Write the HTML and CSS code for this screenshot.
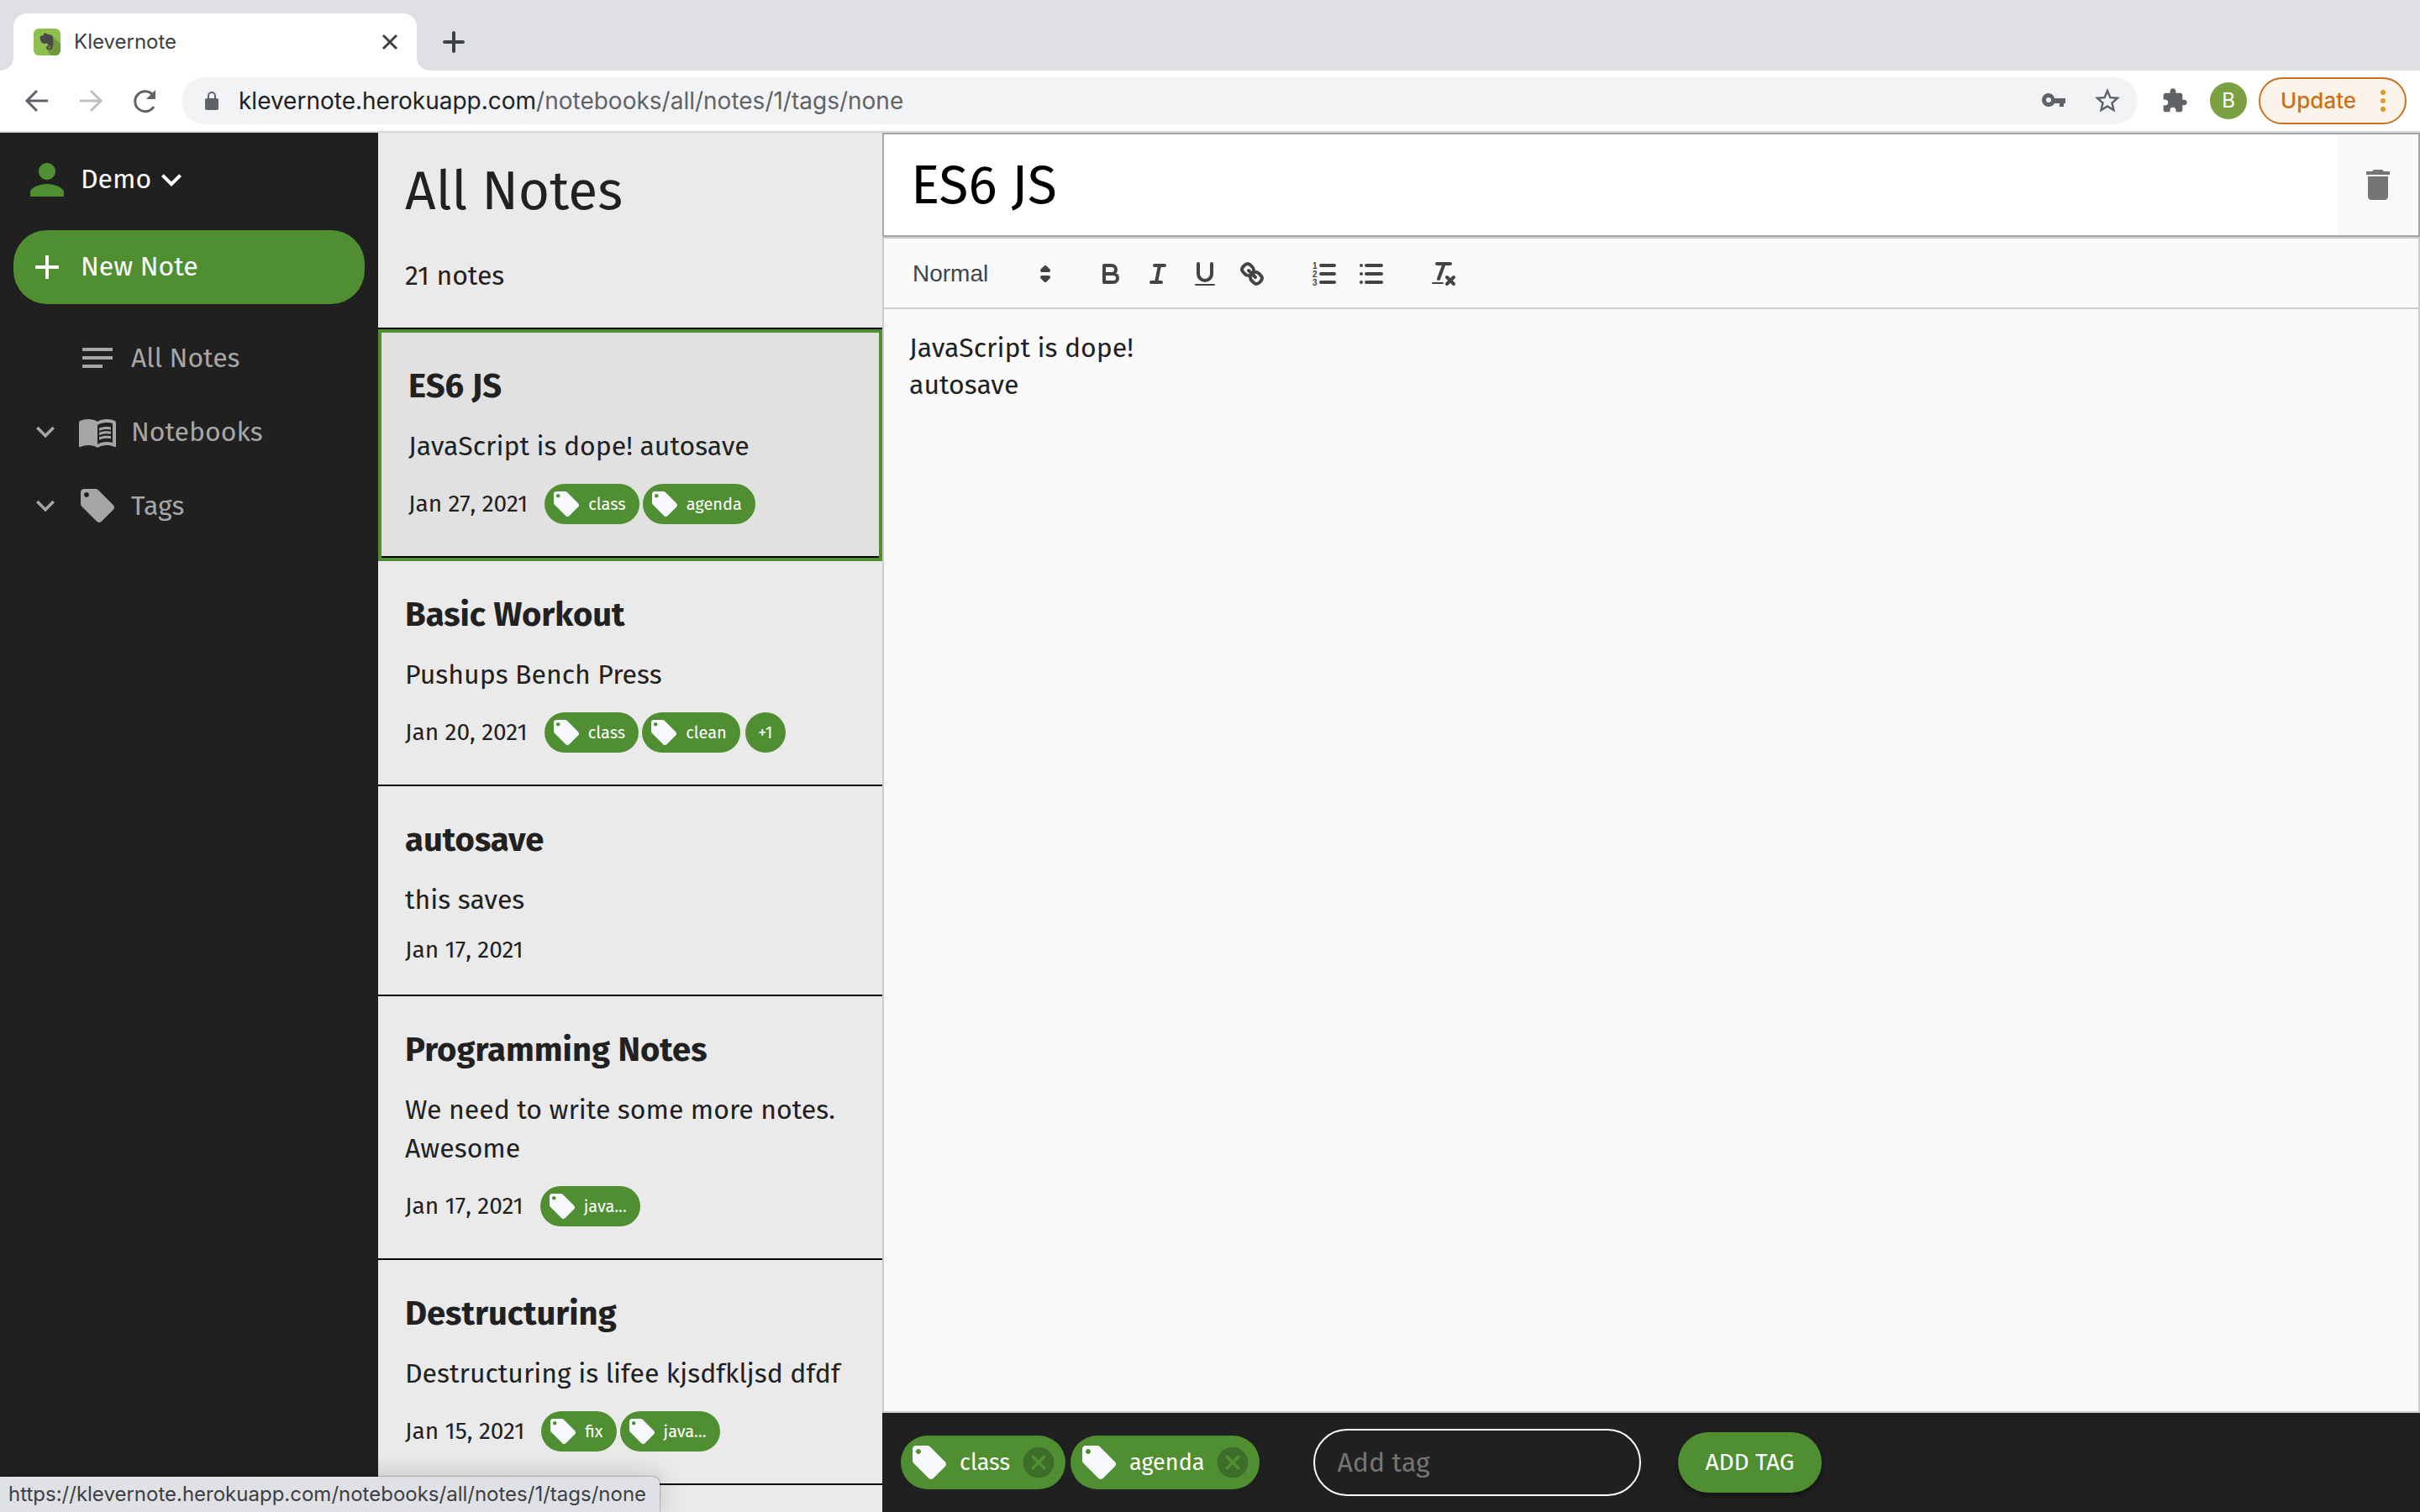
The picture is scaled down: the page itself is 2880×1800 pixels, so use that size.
FILE: index.html
```html
<!DOCTYPE html>
<html lang="en">
<head>
<meta charset="utf-8">
<title>Klevernote</title>
<link rel="stylesheet" href="styles.css">
</head>
<body>
<svg class="defs" aria-hidden="true">
  <symbol id="tag" viewBox="0 0 24 24"><path d="M21.41 11.58l-9-9C12.05 2.22 11.55 2 11 2H4c-1.1 0-2 .9-2 2v7c0 .55.22 1.05.59 1.42l9 9c.36.36.86.58 1.41.58.55 0 1.05-.22 1.41-.59l7-7c.37-.36.59-.86.59-1.41 0-.55-.23-1.06-.59-1.42zM5.5 7C4.67 7 4 6.33 4 5.5S4.67 4 5.5 4 7 4.67 7 5.5 6.33 7 5.5 7z"/></symbol>
  <symbol id="chevron" viewBox="0 0 24 24"><path d="M7.41 8.59L12 13.17l4.59-4.58L18 10l-6 6-6-6 1.41-1.41z"/></symbol>
  <symbol id="cancel" viewBox="0 0 24 24"><path d="M12 2C6.47 2 2 6.47 2 12s4.47 10 10 10 10-4.47 10-10S17.53 2 12 2zm5 13.59L15.59 17 12 13.41 8.41 17 7 15.59 10.59 12 7 8.41 8.41 7 12 10.59 15.59 7 17 8.41 13.41 12 17 15.59z"/></symbol>
</svg>

<header class="browser">
  <div class="tabstrip">
    <div class="tab">
      <svg class="favicon" viewBox="0 0 32 32"><rect width="32" height="32" rx="6" fill="#8fc04e"/><path d="M22 9l10 9v8a6 6 0 0 1-6 6h-6l-4-7z" fill="#6f9a3b"/><path d="M12 6c2-1 4 0 5 1 4 0 6 1 6 5 1 5 0 9-1 12-1 2-7 2-7-1 0-2 2-3 4-2v1c-2 0-2 2 0 2 2-1 1-4 0-4-2 0-3-1-3-3-2 2-5 1-7-1-1-3-2-5-1-7l4-1z" fill="#4a4a4a"/></svg>
      <span class="tab-title">Klevernote</span>
      <button class="bare" aria-label="Close tab"><svg width="20" height="20" viewBox="0 0 20 20" fill="none" stroke="#3c4043" stroke-width="3"><path d="M2 2l16 16M18 2L2 18"/></svg></button>
    </div>
    <button class="bare new-tab" aria-label="New tab"><svg width="26" height="26" viewBox="0 0 26 26" fill="none" stroke="#3c4043" stroke-width="4" stroke-linecap="round"><path d="M13 2v22M2 13h22"/></svg></button>
  </div>
  <div class="toolbar">
    <nav class="history">
      <button class="bare" aria-label="Back"><svg width="40" height="40" viewBox="0 0 40 40" fill="none" stroke="#5f6368" stroke-width="3"><path d="M33 20H9M20 8L8 20l12 12"/></svg></button>
      <button class="bare" aria-label="Forward"><svg width="40" height="40" viewBox="0 0 40 40" fill="none" stroke="#bdc1c6" stroke-width="3"><path d="M7 20h24M20 8l12 12-12 12"/></svg></button>
      <button class="bare" aria-label="Reload"><svg width="40" height="40" viewBox="0 0 40 40"><path d="M31 27a12 12 0 1 1-1-14" fill="none" stroke="#5f6368" stroke-width="3"/><path d="M33 7v11H22z" fill="#5f6368"/></svg></button>
    </nav>
    <div class="address">
      <svg width="18" height="24" viewBox="0 0 18 24"><rect x="1" y="9" width="16" height="14" rx="2" fill="#5f6368"/><path d="M5 10V6a4 4 0 0 1 8 0v4" fill="none" stroke="#5f6368" stroke-width="2"/></svg>
      <span class="url"><span class="host">klevernote.herokuapp.com</span>/notebooks/all/notes/1/tags/none</span>
      <button class="bare" aria-label="Saved passwords"><svg width="32" height="32" viewBox="0 0 32 32"><path fill-rule="evenodd" fill="#5f6368" d="M10 7a8 8 0 1 0 7 12h6v4h5v-4h2v-6H17a8 8 0 0 0-7-6zm0 5a3 3 0 1 1 0 6 3 3 0 0 1 0-6z"/></svg></button>
      <button class="bare" aria-label="Bookmark"><svg width="36" height="36" viewBox="0 0 24 24" fill="#5f6368"><path d="M22 9.24l-7.19-.62L12 2 9.19 8.63 2 9.24l5.46 4.73L5.82 21 12 17.27 18.18 21l-1.63-7.03L22 9.24zM12 15.4l-3.76 2.27 1-4.28-3.32-2.88 4.38-.38L12 6.1l1.71 4.04 4.38.38-3.32 2.88 1 4.28L12 15.4z"/></svg></button>
    </div>
    <button class="bare" aria-label="Extensions"><svg width="32" height="32" viewBox="0 0 24 24" fill="#5f6368"><path d="M20.5 11H19V7c0-1.100-.9-2-2-2h-4V3.500C13 2.120 11.880 1 10.500 1S8 2.120 8 3.500V5H4c-1.100 0-1.990.9-1.990 2v3.800H3.500c1.490 0 2.700 1.210 2.700 2.700s-1.210 2.700-2.700 2.700H2V20c0 1.100.9 2 2 2h3.800v-1.500c0-1.490 1.210-2.700 2.700-2.700 1.490 0 2.700 1.210 2.700 2.700V22H17c1.100 0 2-.9 2-2v-4h1.500c1.380 0 2.500-1.120 2.500-2.500S21.880 11 20.500 11z"/></svg></button>
    <button class="bare avatar">B</button>
    <button class="update">Update <svg width="8" height="28" viewBox="0 0 8 28" fill="#dd9a26"><circle cx="4" cy="4" r="3"/><circle cx="4" cy="14" r="3"/><circle cx="4" cy="24" r="3"/></svg></button>
  </div>
</header>

<main class="app">
  <aside class="sidebar">
    <button class="bare user">
      <svg width="60" height="60" viewBox="0 0 24 24" fill="#4f8f32"><path d="M12 12c2.210 0 4-1.790 4-4s-1.790-4-4-4-4 1.790-4 4 1.790 4 4 4zm0 2c-2.670 0-8 1.340-8 4v2h16v-2c0-2.660-5.330-4-8-4z"/></svg>
      <span>Demo</span>
      <svg width="48" height="48" viewBox="0 0 24 24" fill="#fff"><use href="#chevron"/></svg>
    </button>
    <button class="new-note">
      <svg width="48" height="48" viewBox="0 0 24 24" fill="#fff"><path d="M19 13h-6v6h-2v-6H5v-2h6V5h2v6h6v2z"/></svg>
      <span>New Note</span>
    </button>
    <nav class="links">
      <a href="#all"><span></span><svg width="48" height="48" viewBox="0 0 24 24"><path d="M3 18h12v-2H3v2zM3 6v2h18V6H3zm0 7h18v-2H3v2z"/></svg>All Notes</a>
      <a href="#notebooks"><svg class="twist" viewBox="0 0 24 24"><use href="#chevron"/></svg><svg width="48" height="48" viewBox="0 0 24 24"><path d="M21 5c-1.110-.35-2.330-.5-3.500-.5-1.950 0-4.050.4-5.500 1.500-1.450-1.100-3.550-1.500-5.500-1.500S2.450 4.900 1 6v14.650c0 .25.25.5.5.5.1 0 .15-.05.25-.05C3.100 20.450 5.050 20 6.500 20c1.950 0 4.050.4 5.500 1.500 1.350-.85 3.800-1.500 5.500-1.500 1.650 0 3.350.3 4.750 1.050.1.050.15.050.25.050.25 0 .5-.25.5-.5V6c-.6-.45-1.250-.75-2-1zm0 13.500c-1.100-.35-2.300-.5-3.500-.5-1.700 0-4.150.65-5.500 1.500V8c1.350-.85 3.800-1.500 5.500-1.500 1.200 0 2.400.15 3.500.5v11.500z"/><path d="M17.500 10.500c.88 0 1.730.09 2.500.26V9.240c-.79-.15-1.640-.24-2.500-.24-1.700 0-3.240.29-4.500.83v1.660c1.130-.64 2.700-.99 4.500-.99zM13 12.490v1.660c1.130-.64 2.700-.99 4.500-.99.88 0 1.730.09 2.500.26V11.900c-.79-.15-1.640-.24-2.500-.24-1.700 0-3.240.3-4.500.83zm4.500 1.840c-1.700 0-3.240.29-4.500.83v1.660c1.130-.64 2.700-.99 4.500-.99.88 0 1.730.09 2.500.26v-1.520c-.79-.16-1.640-.24-2.500-.24z"/></svg>Notebooks</a>
      <a href="#tags"><svg class="twist" viewBox="0 0 24 24"><use href="#chevron"/></svg><svg width="48" height="48"><use href="#tag"/></svg>Tags</a>
    </nav>
  </aside>

  <section class="notes">
    <header class="notes-head">
      <h1>All Notes</h1>
      <p>21 notes</p>
    </header>
    <article class="note selected">
      <h2>ES6 JS</h2>
      <p>JavaScript is dope! autosave</p>
      <div class="meta"><time>Jan 27, 2021</time><span class="chip"><svg><use href="#tag"/></svg>class</span><span class="chip"><svg><use href="#tag"/></svg>agenda</span></div>
    </article>
    <article class="note">
      <h2>Basic Workout</h2>
      <p>Pushups Bench Press</p>
      <div class="meta"><time>Jan 20, 2021</time><span class="chip"><svg><use href="#tag"/></svg>class</span><span class="chip"><svg><use href="#tag"/></svg>clean</span><span class="more">+1</span></div>
    </article>
    <article class="note">
      <h2>autosave</h2>
      <p>this saves</p>
      <div class="meta"><time>Jan 17, 2021</time></div>
    </article>
    <article class="note">
      <h2>Programming Notes</h2>
      <p>We need to write some more notes. Awesome</p>
      <div class="meta"><time>Jan 17, 2021</time><span class="chip"><svg><use href="#tag"/></svg>java...</span></div>
    </article>
    <article class="note">
      <h2>Destructuring</h2>
      <p>Destructuring is lifee kjsdfkljsd dfdf</p>
      <div class="meta"><time>Jan 15, 2021</time><span class="chip"><svg><use href="#tag"/></svg>fix</span><span class="chip"><svg><use href="#tag"/></svg>java...</span></div>
    </article>
  </section>

  <section class="editor">
    <div class="title-row">
      <input class="title" aria-label="Note title" value="ES6 JS">
      <button class="bare delete" aria-label="Delete note"><svg width="48" height="48" viewBox="0 0 24 24" fill="#757575"><path d="M6 19c0 1.100.9 2 2 2h8c1.100 0 2-.9 2-2V7H6v12zM19 4h-3.500l-1-1h-5l-1 1H5v2h14V4z"/></svg></button>
    </div>
    <div class="format">
      <div class="picker">
        <select aria-label="Text style"><option>Normal</option></select>
        <svg class="q" viewBox="0 0 18 18"><path class="solid" d="M7 11l2 2 2-2zM7 7l2-2 2 2z"/></svg>
      </div>
      <div class="group">
        <button class="bare" aria-label="Bold"><svg class="q" viewBox="0 0 18 18"><path d="M5 4h4.500a2.500 2.500 0 0 1 0 5H5zM5 9h5.500a2.500 2.500 0 0 1 0 5H5z"/></svg></button>
        <button class="bare" aria-label="Italic"><svg class="q" viewBox="0 0 18 18"><path d="M7 4h6M5 14h6M8 14l2-10"/></svg></button>
        <button class="bare" aria-label="Underline"><svg class="q" viewBox="0 0 18 18"><path d="M5 3v6a4 4 0 0 0 8 0V3"/><rect class="fill" x="3" y="15" width="12" height="1" rx=".5"/></svg></button>
        <button class="bare" aria-label="Link"><svg class="q" viewBox="0 0 18 18"><path d="M7 7l4 4M8.900 4.577a3.476 3.476 0 0 1 .36 4.679A3.476 3.476 0 0 1 4.577 8.900C3.185 7.500 2.035 6.400 4.217 4.217S7.500 3.185 8.900 4.577ZM13.423 9.100a3.476 3.476 0 0 0-4.679-.36 3.476 3.476 0 0 0 .36 4.679c1.392 1.392 2.500 2.542 4.679.36S14.815 10.500 13.423 9.100Z"/></svg></button>
      </div>
      <div class="group">
        <button class="bare" aria-label="Numbered list"><svg class="q" viewBox="0 0 18 18"><path d="M7 4h8M7 9h8M7 14h8"/><text x="2" y="6">1</text><text x="2" y="11">2</text><text x="2" y="16">3</text></svg></button>
        <button class="bare" aria-label="Bulleted list"><svg class="q" viewBox="0 0 18 18"><path d="M6 4h9M6 9h9M6 14h9M3 4h0M3 9h0M3 14h0"/></svg></button>
      </div>
      <div class="group">
        <button class="bare" aria-label="Clear formatting"><svg class="q" viewBox="0 0 18 18"><path d="M5 3h8M6 12l3.350-9M11 11l4 4M15 11l-4 4"/><rect class="fill" x="2" y="14" width="7" height="1" rx=".5"/></svg></button>
      </div>
    </div>
    <textarea class="body" aria-label="Note body">JavaScript is dope!
autosave</textarea>
    <footer class="tagbar">
      <div class="tags">
        <span class="tag"><svg width="48" height="48"><use href="#tag"/></svg>class<button class="bare" aria-label="Remove class"><svg class="x"><use href="#cancel"/></svg></button></span>
        <span class="tag"><svg width="48" height="48"><use href="#tag"/></svg>agenda<button class="bare" aria-label="Remove agenda"><svg class="x"><use href="#cancel"/></svg></button></span>
      </div>
      <input class="add" aria-label="Add tag" placeholder="Add tag">
      <button class="add-btn">ADD TAG</button>
    </footer>
  </section>
</main>
<div class="status">https://klevernote.herokuapp.com/notebooks/all/notes/1/tags/none</div>
</body>
</html>
```
FILE: styles.css
```css
* { box-sizing: border-box; }
body {
  margin: 0;
  height: 100vh;
  display: flex;
  flex-direction: column;
  overflow: hidden;
  color: #212121;
  font: 32px/48px "Fira Sans", "Noto Sans", sans-serif;
}
h1, h2, p { margin: 0; }
button, input, select, textarea { font: inherit; color: inherit; margin: 0; }
.defs { position: absolute; width: 0; height: 0; }
.bare { border: 0; padding: 0; background: none; display: flex; align-items: center; justify-content: center; }
svg { display: block; flex: none; }

/* Browser window */
.browser { font-family: Inter, sans-serif; border-bottom: 2px solid #d9dadf; background: #fff; flex: none; }
.tabstrip { height: 84px; background: #dee0e4; display: flex; padding: 16px 16px 0; align-items: stretch; }
.tab {
  position: relative;
  width: 480px;
  background: #fff;
  border-radius: 16px 16px 0 0;
  display: flex;
  align-items: center;
  padding: 0 22px 0 24px;
  gap: 16px;
}
.tab::before, .tab::after { content: ""; position: absolute; bottom: 0; width: 16px; height: 16px; }
.tab::before { left: -16px; background: radial-gradient(circle at 0 0, transparent 16px, #fff 16px); }
.tab::after { right: -16px; background: radial-gradient(circle at 100% 0, transparent 16px, #fff 16px); }
.favicon { width: 32px; height: 32px; }
.tab-title { flex: 1; font-size: 24px; color: #3c4043; }
.new-tab { margin-left: 31px; }
.toolbar { height: 72px; display: flex; align-items: center; padding: 0 16px 0 24px; }
.history { display: flex; gap: 24px; width: 192px; }
.address {
  flex: 1;
  height: 56px;
  border-radius: 28px;
  background: #f1f3f4;
  display: flex;
  align-items: center;
  padding: 0 18px 0 27px;
  gap: 30px;
  margin-right: 28px;
}
.url { flex: 1; font-size: 28px; color: #5f6368; margin-left: -7px; }
.host { color: #202124; }
.avatar { width: 44px; height: 44px; border-radius: 50%; background: #7aa042; color: #fff; font-size: 24px; margin: 0 14px 0 26px; }
.update {
  width: 176px;
  height: 56px;
  border: 2px solid #c9711c;
  border-radius: 28px;
  background: #fcf4ea;
  color: #c9711c;
  font-size: 26px;
  font-weight: 500;
  padding: 0 22px 0 24px;
  display: flex;
  align-items: center;
  justify-content: space-between;
}

/* Sidebar */
.app { flex: 1; min-height: 0; display: grid; grid-template-columns: 450px 600px 1fr; }
.sidebar { background: #202020; color: #fff; padding: 26px 16px 0; }
.user { height: 60px; margin: 0 0 30px 10px; }
.user span { margin-left: 10px; }
.new-note {
  width: 100%;
  height: 88px;
  border: 0;
  border-radius: 40px;
  background: #4f8f32;
  display: flex;
  align-items: center;
  gap: 16px;
  padding: 0 16px;
}
.links { padding-top: 20px; }
.links a {
  height: 88px;
  display: grid;
  grid-template-columns: 76px 64px 1fr;
  align-items: center;
  color: #a6a6a6;
  fill: #a6a6a6;
  text-decoration: none;
}
.user span, .new-note span { padding-bottom: 2px; }
.twist { width: 44px; height: 44px; margin-left: 16px; }

/* Note list */
.notes { background: #eaeaea; overflow: hidden; }
.notes-head { height: 234px; padding: 28px 32px 0; border-bottom: 2px solid #000; }
.notes-head h1 { font-size: 64px; line-height: 84px; font-weight: 400; }
.notes-head p { margin-top: 34px; }
.note { padding: 32px 32px 34px; border-bottom: 2px solid #000; }
.note h2 { font-size: 40px; line-height: 64px; }
.note p { line-height: 46px; margin: 16px 0 18px; }
.note.selected { background: #e1e1e1; border: 4px solid #4f8f32; box-shadow: inset 0 -2px #000; padding-bottom: 36px; }
.meta { display: flex; align-items: center; min-height: 38px; font-size: 28px; line-height: 38px; gap: 4px; }
time { margin-right: 16px; }
.chip, .more { height: 48px; margin: 4px 0; border-radius: 24px; background: #4f8f32; color: #fff; fill: #f8f8ff; font-size: 20px; display: flex; align-items: center; }
.chip { padding: 0 16px 0 8px; gap: 8px; }
.chip svg { width: 36px; height: 36px; }
.more { width: 48px; justify-content: center; margin-left: 2px; }

/* Editor */
.editor { display: flex; flex-direction: column; min-width: 0; background: #fafafa; }
.title-row { height: 124px; border: 2px solid #a6a6a6; display: flex; }
.title { flex: 1; min-width: 0; border: 0; background: #fff; color: #000; padding: 0 32px; font-size: 64px; outline: 0; }
.delete { width: 96px; }
.format { height: 86px; border: 2px solid #ccc; display: flex; align-items: center; gap: 30px; padding: 2px 16px 0; }
.picker { display: grid; width: 196px; align-items: center; }
.picker > * { grid-area: 1 / 1; }
.picker select { appearance: none; border: 0; background: none; padding: 0 0 0 18px; font: 500 28px/48px "Liberation Sans", Arial, sans-serif; color: #444; }
.picker .q { justify-self: end; margin-right: 2px; }
.group { display: flex; }
.group button { width: 56px; height: 48px; }
.q { width: 36px; height: 36px; fill: none; stroke: #444; stroke-width: 2; stroke-linecap: round; stroke-linejoin: round; }
.q .fill { fill: #444; stroke: none; }
.q .solid { fill: #444; }
.q text { font: bold 5px "Liberation Sans", sans-serif; fill: #444; stroke: none; }
.body { flex: 1; resize: none; border: 2px solid #ccc; border-top: 0; background: none; padding: 24px 30px; line-height: 44px; outline: 0; }
.tagbar { height: 118px; background: #202020; color: #fff; display: flex; align-items: center; padding: 0 22px; }
.tags { display: flex; gap: 6px; margin-right: 64px; }
.tag { height: 64px; border-radius: 32px; background: #4f8f32; fill: #f8f8ff; display: flex; align-items: center; padding: 0 10px; font-size: 28px; gap: 12px; }
.tag .x { width: 44px; height: 44px; fill: #3d6d28; }
.tag { font-size: 27px; }
.add { width: 390px; height: 80px; border: 2px solid #fff; border-radius: 40px; background: none; padding: 0 26px; outline: 0; }
.add::placeholder { color: #757575; opacity: 1; }
.add-btn { height: 72px; border: 0; border-radius: 36px; background: #4f8f32; font-size: 28px; padding: 0 32px; margin-left: 44px; box-shadow: 0 4px 6px #0006; }

.status {
  position: absolute;
  left: 0;
  bottom: 0;
  height: 42px;
  padding: 0 16px 0 10px;
  border-radius: 0 8px 0 0;
  background: #dfe1e5;
  color: #3c4043;
  font: 24px/42px Inter, sans-serif;
  box-shadow: 0 0 2px #0009, 0 0 32px #0003;
}
```
